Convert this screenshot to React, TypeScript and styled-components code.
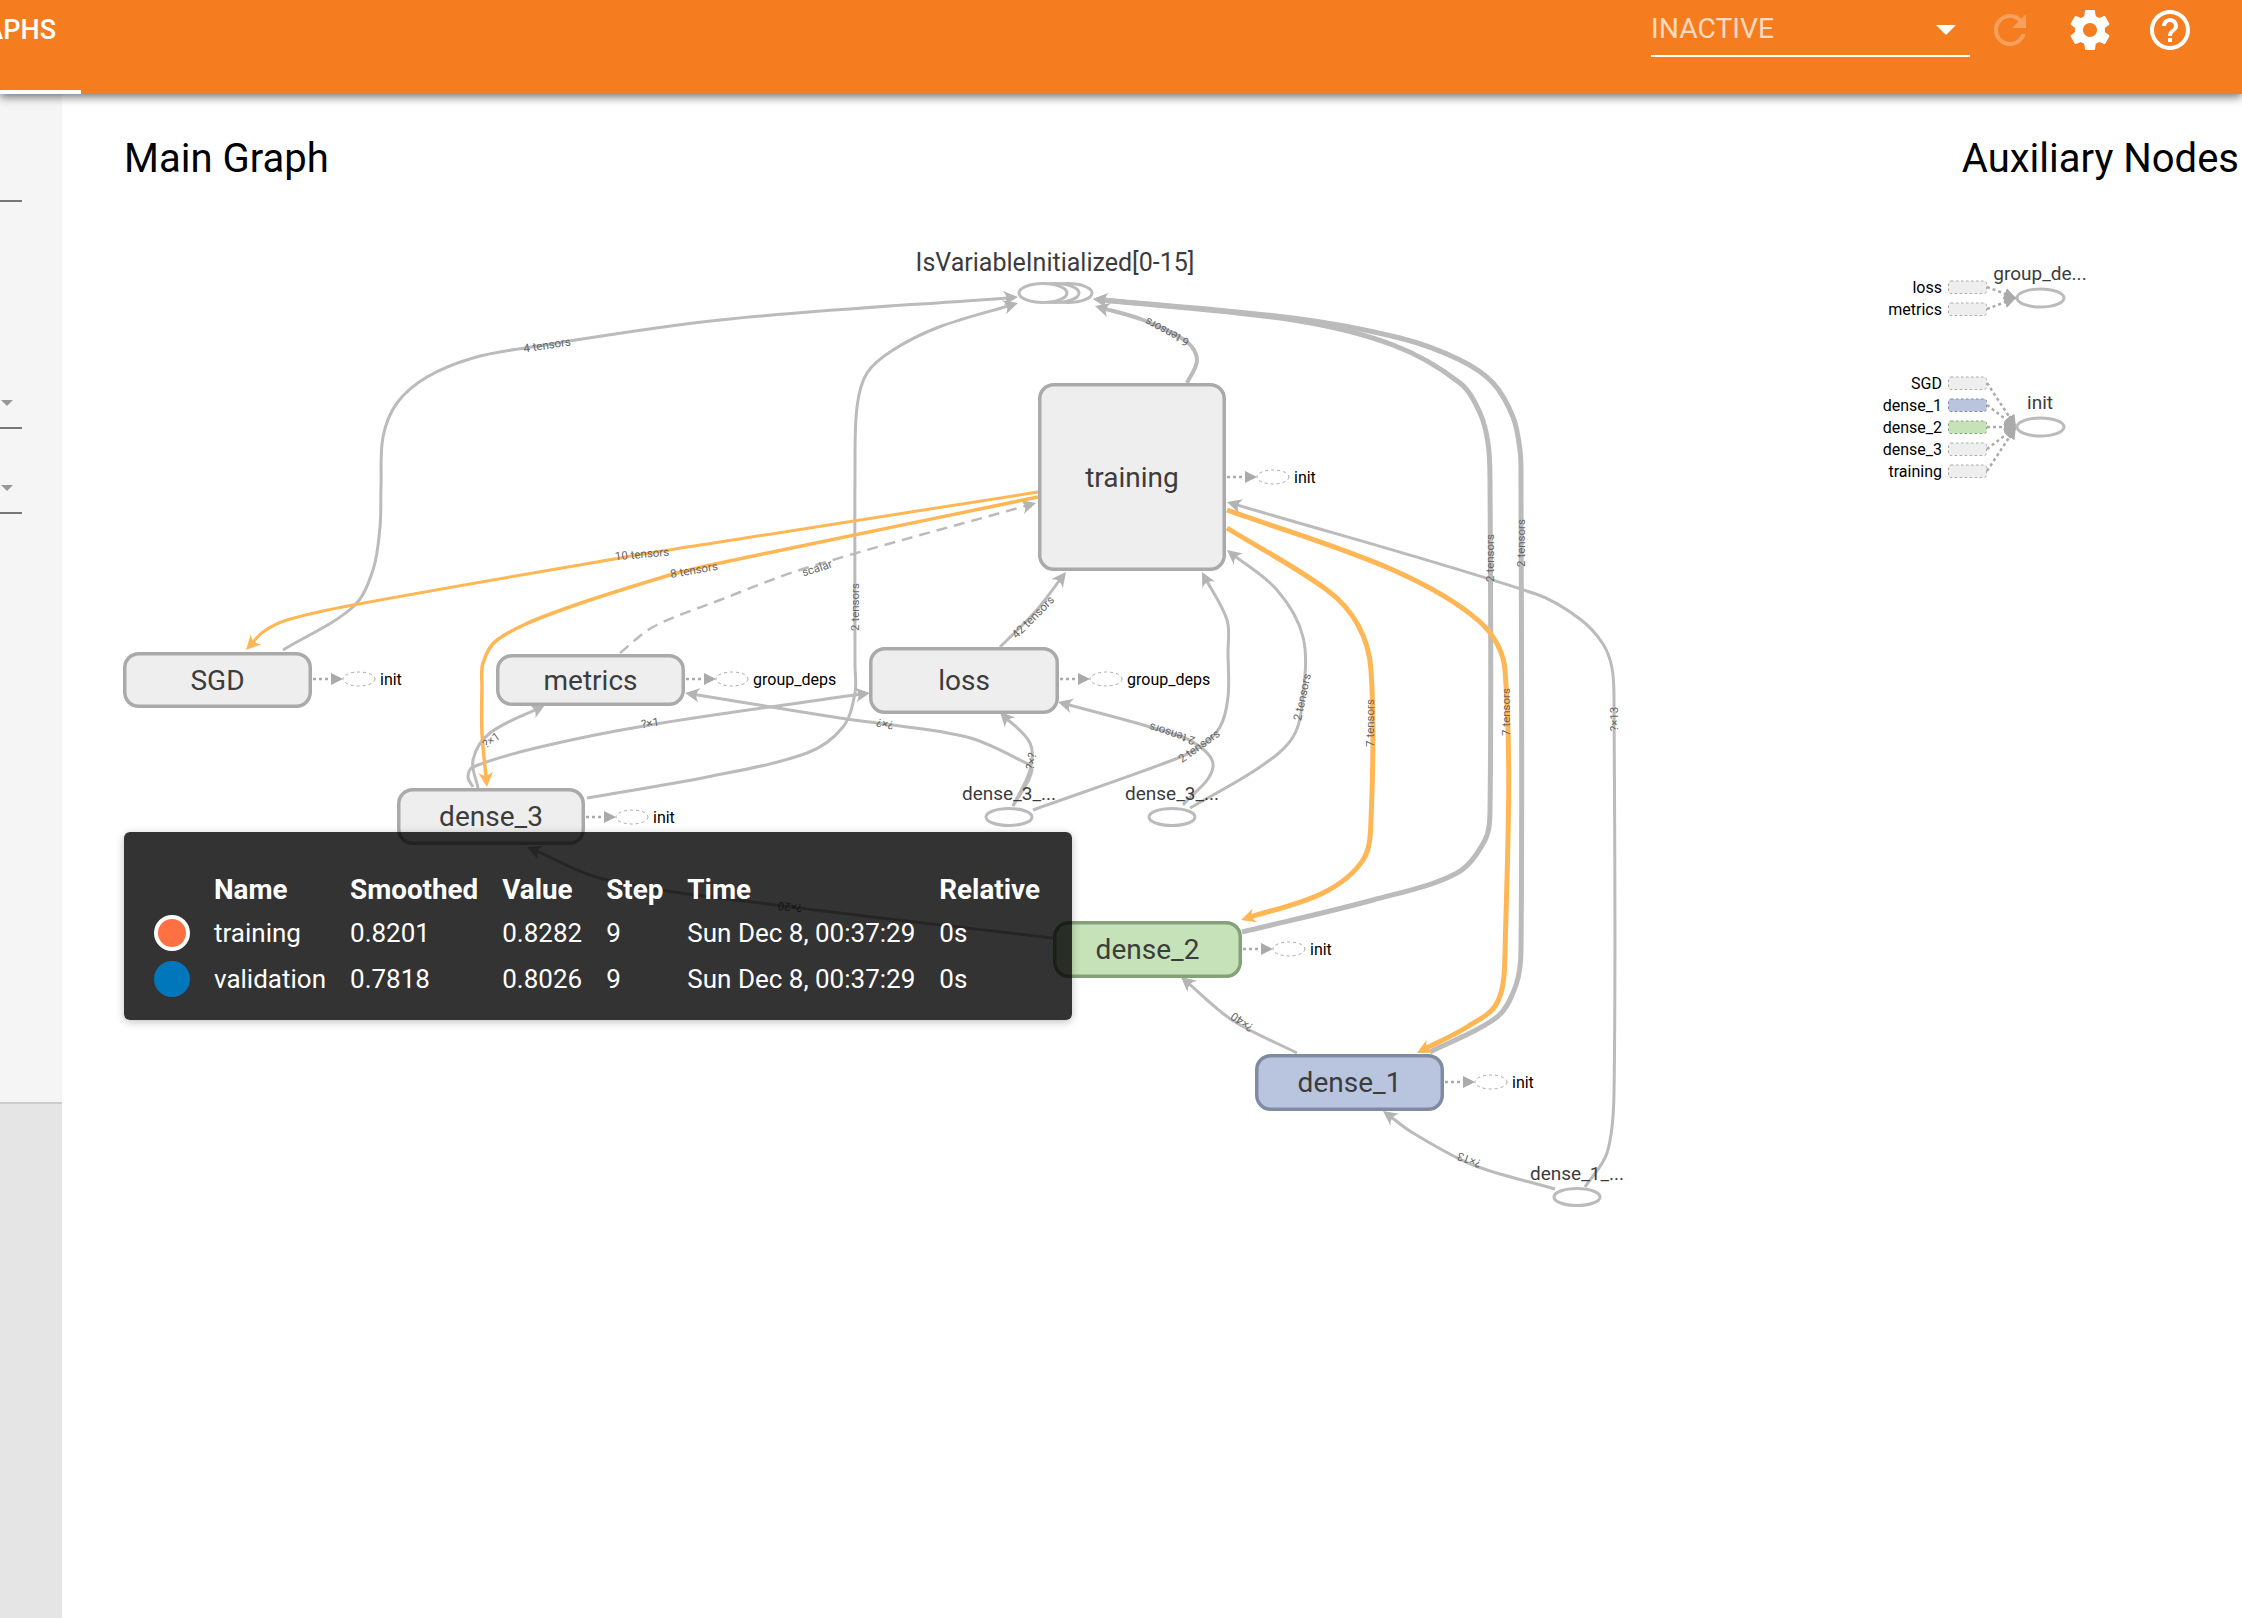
import React from 'react';
import styled, { createGlobalStyle } from 'styled-components';

type Point = [number, number];

const GlobalStyle = createGlobalStyle`
  html, body {
    margin: 0;
    padding: 0;
    background: #fff;
    overflow: hidden;
    font-family: Roboto, "Liberation Sans", sans-serif;
  }
`;

const Page = styled.div`
  width: 2242px;
  height: 1618px;
  display: flex;
  flex-direction: column;
  overflow: hidden;
`;

const Header = styled.header`
  position: relative;
  z-index: 2;
  flex: 0 0 94px;
  display: flex;
  align-items: flex-start;
  padding-right: 48px;
  background: #f57d20;
  color: #fff;
  box-shadow: 0 3px 9px rgba(0, 0, 0, 0.55);
`;

const Tab = styled.div`
  box-sizing: border-box;
  width: 81px;
  height: 94px;
  display: flex;
  justify-content: flex-end;
  padding: 14px 25px 0 0;
  border-bottom: 4px solid #fff;
  font-size: 27px;
  line-height: 32px;
  font-weight: 500;
  white-space: nowrap;
`;

const RunSelect = styled.div`
  box-sizing: border-box;
  margin-left: auto;
  width: 319px;
  height: 57px;
  display: flex;
  align-items: center;
  justify-content: space-between;
  padding: 2px 14px 0 0;
  border-bottom: 2px solid #fff;
  font-size: 28.3px;
`;

const RunValue = styled.span`
  color: rgba(255, 255, 255, 0.72);
`;

const SelectCaret = styled.span`
  width: 0;
  height: 0;
  margin-top: 2px;
  border-left: 10px solid transparent;
  border-right: 10px solid transparent;
  border-top: 10px solid #fff;
`;

const IconRow = styled.div`
  display: flex;
  gap: 32px;
  margin-left: 16px;
  margin-top: 6px;
`;

const Icon = styled.svg<{ $dim?: boolean }>`
  display: block;
  width: 48px;
  height: 48px;
  fill: #fff;
  opacity: ${p => (p.$dim ? 0.27 : 1)};
`;

const Body = styled.div`
  flex: 1;
  display: flex;
  min-height: 0;
`;

const Sidebar = styled.aside`
  flex: 0 0 62px;
  display: flex;
  flex-direction: column;
  background: #e5e5e5;
`;

const SidebarTop = styled.div`
  box-sizing: border-box;
  height: 1010px;
  border-bottom: 2px solid #ccc;
  background: #f5f5f5;
`;

const Field = styled.div<{ $height: number; $gap: number }>`
  box-sizing: border-box;
  width: 22px;
  height: ${p => p.$height}px;
  display: flex;
  align-items: flex-end;
  padding: 0 0 ${p => p.$gap}px 1px;
  border-bottom: 2px solid #777;
`;

const FieldCaret = styled.span`
  width: 0;
  height: 0;
  border-left: 6px solid transparent;
  border-right: 6px solid transparent;
  border-top: 6px solid #999;
`;

const Main = styled.main`
  flex: 1;
  min-width: 0;
  display: flex;
  flex-direction: column;
`;

const HeadingRow = styled.div`
  flex: 0 0 126px;
  display: flex;
  justify-content: space-between;
  padding: 40px 3px 0 62px;
  box-sizing: border-box;
`;

const Heading = styled.h2`
  margin: 0;
  font-size: 40px;
  line-height: 50px;
  font-weight: 400;
  color: #000;
`;

const Scene = styled.div`
  position: relative;
  flex: 1;
`;

const GraphSvg = styled.svg`
  display: block;
  width: 2180px;
  height: 1398px;
  font-family: Roboto, "Liberation Sans", sans-serif;
`;

const EdgeLine = styled.path<{ $width: number; $orange?: boolean; $dashed?: boolean }>`
  fill: none;
  stroke: ${p => (p.$orange ? '#ffb655' : '#bbb')};
  stroke-width: ${p => p.$width}px;
  stroke-dasharray: ${p => (p.$dashed ? '11 7' : 'none')};
`;

const EdgeLabel = styled.text`
  font-size: 11.5px;
  fill: #666;
  text-anchor: middle;
  dominant-baseline: central;
`;

const tones = {
  grey: { fill: '#eee', stroke: '#aaa' },
  green: { fill: '#c6e2b8', stroke: '#84a27a' },
  blue: { fill: '#b9c5de', stroke: '#7f8ba1' },
};

type Tone = keyof typeof tones;

const NodeBox = styled.rect<{ $tone: Tone }>`
  fill: ${p => tones[p.$tone].fill};
  stroke: ${p => tones[p.$tone].stroke};
  stroke-width: 3.5px;
`;

const NodeLabel = styled.text<{ $size: number }>`
  font-size: ${p => p.$size}px;
  fill: #3c3c3c;
  text-anchor: middle;
  dominant-baseline: central;
`;

const Oval = styled.ellipse`
  fill: #fff;
  stroke: #bbb;
  stroke-width: 3px;
`;

const GhostOval = styled.ellipse`
  fill: none;
  stroke: #aaa;
  stroke-width: 1px;
  stroke-dasharray: 3 3;
`;

const DottedLink = styled.line`
  stroke: #aaa;
  stroke-width: 2.5px;
  stroke-dasharray: 3 3;
`;

const SideText = styled.text<{ $end?: boolean }>`
  font-size: 16px;
  fill: #000;
  text-anchor: ${p => (p.$end ? 'end' : 'start')};
  dominant-baseline: central;
`;

const AuxBox = styled.rect<{ $tone: Tone }>`
  fill: ${p => tones[p.$tone].fill};
  stroke: ${p => tones[p.$tone].stroke};
  stroke-width: 1px;
  stroke-dasharray: 2.5 2.5;
`;

const Tooltip = styled.div`
  position: absolute;
  left: 62px;
  top: 612px;
  box-sizing: border-box;
  width: 948px;
  height: 188px;
  padding: 36px 0 0 30px;
  border-radius: 6px;
  background: rgba(0, 0, 0, 0.8);
  box-shadow: 0 2px 8px rgba(0, 0, 0, 0.25);
  color: #fff;
`;

const ValueTable = styled.table`
  border-collapse: collapse;
  font-size: 26px;
  white-space: nowrap;
`;

const HeadCell = styled.th`
  height: 42px;
  padding: 0 24px 0 0;
  text-align: left;
  font-size: 27.8px;
  font-weight: 700;
`;

const Cell = styled.td`
  height: 46px;
  padding: 0 24px 0 0;
`;

const Swatch = styled.span<{ $color: string; $ring?: boolean }>`
  display: block;
  box-sizing: border-box;
  width: 36px;
  height: 36px;
  border-radius: 50%;
  background: ${p => p.$color};
  border: ${p => (p.$ring ? '4px solid #fff' : 'none')};
`;

// rounded curve through hand-picked points, last point pulled back under the arrow head
const HEAD_BACK = 5;

const curve = (raw: Point[]): string => {
  const pts = raw.map(p => [...p] as Point);
  const a = pts[pts.length - 2];
  const b = pts[pts.length - 1];
  const len = Math.hypot(b[0] - a[0], b[1] - a[1]);
  b[0] -= ((b[0] - a[0]) / len) * HEAD_BACK;
  b[1] -= ((b[1] - a[1]) / len) * HEAD_BACK;

  const tangent = (i: number): Point => {
    const p = pts[Math.max(i - 1, 0)];
    const n = pts[Math.min(i + 1, pts.length - 1)];
    const l = Math.hypot(n[0] - p[0], n[1] - p[1]) || 1;
    return [(n[0] - p[0]) / l, (n[1] - p[1]) / l];
  };
  let d = `M${pts[0][0]},${pts[0][1]}`;
  for (let i = 0; i < pts.length - 1; i++) {
    const seg = Math.hypot(pts[i + 1][0] - pts[i][0], pts[i + 1][1] - pts[i][1]) / 3;
    const t0 = tangent(i);
    const t1 = tangent(i + 1);
    d += ` C${pts[i][0] + t0[0] * seg},${pts[i][1] + t0[1] * seg} ${pts[i + 1][0] - t1[0] * seg},${pts[i + 1][1] - t1[1] * seg} ${pts[i + 1][0]},${pts[i + 1][1]}`;
  }
  return d;
};

interface Edge {
  pts: Point[];
  width: number;
  orange?: boolean;
  dashed?: boolean;
}

const edges: Edge[] = [
  // SGD -> IsVariableInitialized
  { width: 3, pts: [[283, 650], [353, 607], [373, 570], [380, 527], [381, 487], [383, 437], [397, 403], [427, 377], [473, 358], [525, 348], [720, 320], [1018, 297]] },
  // dense_3 -> IsVariableInitialized
  { width: 3, pts: [[587, 798], [707, 777], [807, 753], [843, 727], [855, 693], [855, 665], [855, 470], [857, 407], [867, 373], [893, 350], [939, 327], [1018, 303]] },
  // thick pair from dense_2 and dense_1
  { width: 5, pts: [[1242, 932], [1373, 900], [1457, 873], [1485, 840], [1490, 810], [1490, 480], [1488, 443], [1480, 413], [1460, 383], [1393, 345], [1293, 320], [1093, 299]] },
  { width: 5, pts: [[1430, 1052], [1497, 1017], [1516, 985], [1521, 950], [1521, 480], [1520, 450], [1513, 417], [1493, 383], [1460, 360], [1400, 338], [1293, 318], [1093, 299]] },
  // training -> IsVariableInitialized
  { width: 4, pts: [[1187, 383], [1197, 360], [1187, 342], [1143, 320], [1095, 306]] },
  // loss -> training
  { width: 3, pts: [[1000, 647], [1035, 612], [1066, 572]] },
  // dense_3_* -> training
  { width: 3, pts: [[1033, 810], [1173, 760], [1200, 747], [1220, 727], [1228, 697], [1228, 653], [1227, 620], [1202, 572]] },
  { width: 3, pts: [[1190, 808], [1260, 767], [1293, 737], [1303, 697], [1303, 637], [1277, 590], [1227, 550]] },
  // dense_3_* -> loss
  { width: 3, pts: [[1183, 805], [1213, 767], [1193, 742], [1150, 727], [1058, 702]] },
  { width: 3, pts: [[1013, 806], [1030, 770], [1030, 743], [1000, 712]] },
  // dense_3_ -> metrics
  { width: 3, pts: [[1013, 806], [1032, 770], [1020, 760], [967, 737], [877, 723], [840, 718], [685, 693]] },
  // dense_3 -> loss / metrics
  { width: 3, pts: [[473, 787], [468, 777], [473, 767], [540, 747], [650, 725], [840, 697], [870, 693]] },
  { width: 3, pts: [[478, 788], [473, 760], [490, 733], [545, 705]] },
  // dense_2 -> dense_3 (under the tooltip)
  { width: 3, pts: [[1053, 938], [800, 908], [607, 880], [527, 847]] },
  // dense_1 -> dense_2, dense_1_kernel -> dense_1, -> training
  { width: 3, pts: [[1297, 1053], [1232, 1020], [1181, 977]] },
  { width: 3, pts: [[1555, 1189], [1473, 1165], [1413, 1133], [1383, 1111]] },
  { width: 3, pts: [[1585, 1187], [1607, 1153], [1614, 1093], [1614, 700], [1612, 668], [1603, 644], [1580, 619], [1536, 594], [1227, 502]] },
  // metrics -> training
  { width: 2.5, dashed: true, pts: [[620, 653], [653, 627], [720, 600], [806, 568], [1036, 503]] },
  // training -> everything orange
  { width: 3, orange: true, pts: [[1038, 492], [720, 542], [620, 558], [353, 605], [287, 620], [263, 632], [246, 650]] },
  { width: 3.5, orange: true, pts: [[1038, 497], [720, 563], [670, 575], [553, 613], [497, 640], [483, 663], [482, 687], [482, 733], [487, 787]] },
  { width: 5, orange: true, pts: [[1227, 528], [1327, 590], [1358, 625], [1371, 670], [1371, 820], [1363, 860], [1323, 893], [1241, 920]] },
  { width: 5, orange: true, pts: [[1227, 510], [1393, 570], [1480, 622], [1505, 670], [1505, 953], [1497, 1003], [1467, 1027], [1417, 1053]] },
];

const edgeLabels: { x: number; y: number; r: number; t: string }[] = [
  { x: 547, y: 345, r: -8.5, t: '4 tensors' },
  { x: 642, y: 554, r: -5, t: '10 tensors' },
  { x: 694, y: 570, r: -10, t: '8 tensors' },
  { x: 817, y: 568, r: -18, t: 'scalar' },
  { x: 855, y: 607, r: -90, t: '2 tensors' },
  { x: 1167, y: 332, r: 208, t: '6 tensors' },
  { x: 1033, y: 617, r: -45, t: '42 tensors' },
  { x: 1302, y: 697, r: -78, t: '2 tensors' },
  { x: 1199, y: 746, r: -36, t: '2 tensors' },
  { x: 1172, y: 734, r: 198, t: '2 tensors' },
  { x: 1031, y: 761, r: -80, t: '?×?' },
  { x: 885, y: 724, r: 192, t: '?×?' },
  { x: 650, y: 723, r: -9, t: '?×1' },
  { x: 491, y: 740, r: -35, t: '?×1' },
  { x: 790, y: 907, r: 185, t: '?×20' },
  { x: 1242, y: 1022, r: 215, t: '?×40' },
  { x: 1469, y: 1160, r: 200, t: '?×13' },
  { x: 1614, y: 719, r: -90, t: '?×13' },
  { x: 1490, y: 558, r: -90, t: '2 tensors' },
  { x: 1521, y: 543, r: -90, t: '2 tensors' },
  { x: 1370, y: 723, r: -90, t: '7 tensors' },
  { x: 1506, y: 712, r: -90, t: '7 tensors' },
];

const nodes: { label: string; l: number; t: number; r: number; b: number; tone: Tone; side: string; sideY: number }[] = [
  { label: 'training', l: 1038, t: 383, r: 1226, b: 571, tone: 'grey', side: 'init', sideY: 477 },
  { label: 'SGD', l: 123, t: 652, r: 312, b: 708, tone: 'grey', side: 'init', sideY: 679 },
  { label: 'metrics', l: 496, t: 654, r: 685, b: 706, tone: 'grey', side: 'group_deps', sideY: 679 },
  { label: 'loss', l: 869, t: 647, r: 1059, b: 714, tone: 'grey', side: 'group_deps', sideY: 679 },
  { label: 'dense_3', l: 397, t: 788, r: 585, b: 845, tone: 'grey', side: 'init', sideY: 817 },
  { label: 'dense_2', l: 1053, t: 921, r: 1242, b: 978, tone: 'green', side: 'init', sideY: 949 },
  { label: 'dense_1', l: 1255, t: 1054, r: 1444, b: 1111, tone: 'blue', side: 'init', sideY: 1082 },
];

const ovals: { x: number; y: number; label: string; ly: number }[] = [
  { x: 1009, y: 817, label: 'dense_3_...', ly: 793 },
  { x: 1172, y: 817, label: 'dense_3_...', ly: 793 },
  { x: 1577, y: 1197, label: 'dense_1_...', ly: 1173 },
];

const auxGroups: { label: string; y: number; labelY: number; rows: { t: string; y: number; tone: Tone }[] }[] = [
  {
    label: 'group_de...',
    y: 298,
    labelY: 273,
    rows: [
      { t: 'loss', y: 287, tone: 'grey' },
      { t: 'metrics', y: 309, tone: 'grey' },
    ],
  },
  {
    label: 'init',
    y: 427,
    labelY: 402,
    rows: [
      { t: 'SGD', y: 383, tone: 'grey' },
      { t: 'dense_1', y: 405, tone: 'blue' },
      { t: 'dense_2', y: 427, tone: 'green' },
      { t: 'dense_3', y: 449, tone: 'grey' },
      { t: 'training', y: 471, tone: 'grey' },
    ],
  },
];

const rows = [
  { name: 'training', color: '#ff7043', ring: true, smoothed: '0.8201', value: '0.8282', step: '9', time: 'Sun Dec 8, 00:37:29', rel: '0s' },
  { name: 'validation', color: '#0077bb', ring: false, smoothed: '0.7818', value: '0.8026', step: '9', time: 'Sun Dec 8, 00:37:29', rel: '0s' },
];

const Graph: React.FC = () => (
  <GraphSvg viewBox="62 220 2180 1398">
    <defs>
      <marker id="head-grey" viewBox="0 0 10 10" refX={6.67} refY={5} markerWidth={15} markerHeight={15} markerUnits="userSpaceOnUse" orient="auto">
        <path d="M0,0 L10,5 L0,10 C3,7 3,3 0,0" fill="#b4b4b4" />
      </marker>
      <marker id="head-orange" viewBox="0 0 10 10" refX={6.67} refY={5} markerWidth={15} markerHeight={15} markerUnits="userSpaceOnUse" orient="auto">
        <path d="M0,0 L10,5 L0,10 C3,7 3,3 0,0" fill="#ffb655" />
      </marker>
      <marker id="head-side" viewBox="0 0 10 10" refX={10} refY={5} markerWidth={12} markerHeight={12} markerUnits="userSpaceOnUse" orient="auto">
        <path d="M0,0 L10,5 L0,10 Z" fill="#aaa" />
      </marker>
    </defs>

    {edges.map((e, i) => (
      <EdgeLine
        key={i}
        d={curve(e.pts)}
        $width={e.width}
        $orange={e.orange}
        $dashed={e.dashed}
        markerEnd={`url(#head-${e.orange ? 'orange' : 'grey'})`}
      />
    ))}

    <Oval cx={1068} cy={293} rx={24} ry={9.5} />
    <Oval cx={1055} cy={293} rx={24} ry={9.5} />
    <Oval cx={1043} cy={293} rx={24} ry={9.5} />
    <NodeLabel x={1055} y={262} $size={25}>IsVariableInitialized[0-15]</NodeLabel>

    {ovals.map((o, i) => (
      <g key={i}>
        <Oval cx={o.x} cy={o.y} rx={23} ry={8.5} />
        <NodeLabel x={o.x} y={o.ly} $size={19}>{o.label}</NodeLabel>
      </g>
    ))}

    {nodes.map(n => (
      <g key={n.label}>
        <NodeBox x={n.l + 1.75} y={n.t + 1.75} width={n.r - n.l - 3.5} height={n.b - n.t - 3.5} rx={14} $tone={n.tone} />
        <NodeLabel x={(n.l + n.r) / 2} y={(n.t + n.b) / 2} $size={28}>{n.label}</NodeLabel>
        <DottedLink x1={n.r + 1} y1={n.sideY} x2={n.r + 31} y2={n.sideY} markerEnd="url(#head-side)" />
        <GhostOval cx={n.r + 47} cy={n.sideY} rx={16} ry={7} />
        <SideText x={n.r + 68} y={n.sideY}>{n.side}</SideText>
      </g>
    ))}

    {edgeLabels.map((l, i) => (
      <EdgeLabel key={i} x={l.x} y={l.y} transform={`rotate(${l.r} ${l.x} ${l.y})`}>{l.t}</EdgeLabel>
    ))}

    {auxGroups.map(g => (
      <g key={g.label}>
        {g.rows.map(r => (
          <g key={r.t}>
            <SideText $end x={1942} y={r.y}>{r.t}</SideText>
            <AuxBox x={1948.5} y={r.y - 6} width={38} height={12.5} rx={2.5} $tone={r.tone} />
            <DottedLink x1={1987} y1={r.y} x2={2016} y2={g.y} markerEnd="url(#head-side)" />
          </g>
        ))}
        <Oval cx={2040.5} cy={g.y} rx={23.5} ry={9} />
        <NodeLabel x={2040} y={g.labelY} $size={19}>{g.label}</NodeLabel>
      </g>
    ))}
  </GraphSvg>
);

export default function App() {
  return (
    <Page>
      <GlobalStyle />
      <Header>
        <Tab>GRAPHS</Tab>
        <RunSelect>
          <RunValue>INACTIVE</RunValue>
          <SelectCaret />
        </RunSelect>
        <IconRow>
          <Icon $dim viewBox="0 0 24 24">
            <path d="M17.65 6.35C16.2 4.9 14.21 4 12 4c-4.42 0-7.99 3.58-7.99 8s3.57 8 7.99 8c3.73 0 6.84-2.55 7.73-6h-2.08c-.82 2.33-3.04 4-5.65 4-3.31 0-6-2.69-6-6s2.69-6 6-6c1.66 0 3.14.69 4.22 1.78L13 11h7V4l-2.35 2.35z" />
          </Icon>
          <Icon viewBox="0 0 24 24">
            <path d="M19.43 12.98c.04-.32.07-.64.07-.98s-.03-.66-.07-.98l2.11-1.65c.19-.15.24-.42.12-.64l-2-3.46c-.12-.22-.39-.3-.61-.22l-2.49 1c-.52-.4-1.08-.73-1.69-.98l-.38-2.65C14.46 2.18 14.25 2 14 2h-4c-.25 0-.46.18-.49.42l-.38 2.65c-.61.25-1.17.59-1.69.98l-2.49-1c-.23-.09-.49 0-.61.22l-2 3.46c-.13.22-.07.49.12.64l2.11 1.65c-.04.32-.07.65-.07.98s.03.66.07.98l-2.11 1.65c-.19.15-.24.42-.12.64l2 3.46c.12.22.39.3.61.22l2.49-1c.52.4 1.08.73 1.69.98l.38 2.65c.03.24.24.42.49.42h4c.25 0 .46-.18.49-.42l.38-2.65c.61-.25 1.17-.59 1.69-.98l2.49 1c.23.09.49 0 .61-.22l2-3.46c.12-.22.07-.49-.12-.64l-2.11-1.65zM12 15.5c-1.93 0-3.5-1.57-3.5-3.5s1.57-3.5 3.5-3.5 3.5 1.57 3.5 3.5-1.57 3.5-3.5 3.5z" />
          </Icon>
          <Icon viewBox="0 0 24 24">
            <path d="M11 18h2v-2h-2v2zm1-16C6.48 2 2 6.48 2 12s4.48 10 10 10 10-4.48 10-10S17.52 2 12 2zm0 18c-4.41 0-8-3.59-8-8s3.59-8 8-8 8 3.59 8 8-3.59 8-8 8zm0-14c-2.21 0-4 1.79-4 4h2c0-1.1.9-2 2-2s2 .9 2 2c0 2-3 1.75-3 5h2c0-2.25 3-2.5 3-5 0-2.21-1.79-4-4-4z" />
          </Icon>
        </IconRow>
      </Header>
      <Body>
        <Sidebar>
          <SidebarTop>
            <Field $height={108} $gap={0} />
            <Field $height={227} $gap={21}><FieldCaret /></Field>
            <Field $height={85} $gap={21}><FieldCaret /></Field>
          </SidebarTop>
        </Sidebar>
        <Main>
          <HeadingRow>
            <Heading>Main Graph</Heading>
            <Heading>Auxiliary Nodes</Heading>
          </HeadingRow>
          <Scene>
            <Graph />
            <Tooltip>
              <ValueTable>
                <thead>
                  <tr>
                    <HeadCell />
                    <HeadCell>Name</HeadCell>
                    <HeadCell>Smoothed</HeadCell>
                    <HeadCell>Value</HeadCell>
                    <HeadCell>Step</HeadCell>
                    <HeadCell>Time</HeadCell>
                    <HeadCell>Relative</HeadCell>
                  </tr>
                </thead>
                <tbody>
                  {rows.map(r => (
                    <tr key={r.name}>
                      <Cell><Swatch $color={r.color} $ring={r.ring} /></Cell>
                      <Cell>{r.name}</Cell>
                      <Cell>{r.smoothed}</Cell>
                      <Cell>{r.value}</Cell>
                      <Cell>{r.step}</Cell>
                      <Cell>{r.time}</Cell>
                      <Cell>{r.rel}</Cell>
                    </tr>
                  ))}
                </tbody>
              </ValueTable>
            </Tooltip>
          </Scene>
        </Main>
      </Body>
    </Page>
  );
}
